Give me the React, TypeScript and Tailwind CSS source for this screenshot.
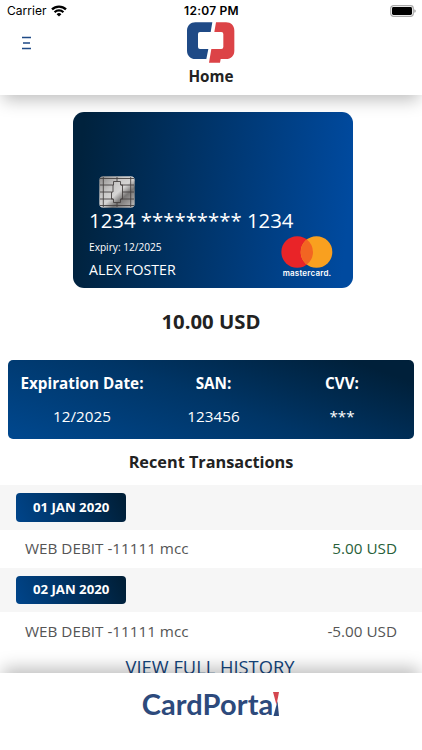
import { type ReactNode } from 'react'

const transactions = [
  { date: '01 JAN 2020', label: 'WEB DEBIT -11111 mcc', amount: '5.00 USD', credit: true },
  { date: '02 JAN 2020', label: 'WEB DEBIT -11111 mcc', amount: '-5.00 USD', credit: false },
]

function StatusBar() {
  return (
    <div className="grid h-[22px] grid-cols-3 items-center pl-[7px] pr-[6px] font-['Inter',sans-serif] text-[12px] leading-[22px] text-black">
      <div className="flex items-center gap-[5px]">
        <span className="tracking-[0.02px]">Carrier</span>
        <svg width="16" height="12" viewBox="0 0 16 12" fill="none" stroke="#000" strokeWidth="2.3">
          <path d="M1 4.4a10 10 0 0 1 14 0" />
          <path d="M3.6 7.2a6.3 6.3 0 0 1 8.8 0" />
          <path d="M8 11.6 5.6 9.2a3.4 3.4 0 0 1 4.8 0Z" fill="#000" stroke="none" />
        </svg>
      </div>
      <span className="whitespace-nowrap text-center font-semibold tracking-[0.25px]">12:07 PM</span>
      <svg className="justify-self-end" width="26" height="12" viewBox="0 0 26 12">
        <rect x="0.7" y="0.7" width="22.6" height="10.6" rx="2.8" fill="#fff" stroke="#a9a9a9" strokeWidth="1.2" />
        <rect x="2" y="2" width="20" height="8" rx="1.4" fill="#000" />
        <path d="M24.500 4.2c1.4.5 1.4 3.1 0 3.6Z" fill="#777" />
      </svg>
    </div>
  )
}

function Logo() {
  return (
    <svg width="48" height="41" viewBox="141 67 144 123">
      <path
        fill="#1f4a86"
        d="M217 68 212 97H180Q174 97 174 103V142Q174 148 180 148H205L199 178H166C152 178 141 168 141 153V93C141 78 152 68 166 68Z"
      />
      <path
        fill="#dc4347"
        d="M228 68H258C273 68 283 78 283 93V153C283 168 273 178 258 178H242L240 189H207L214 148H244Q250 148 250 142V103Q250 97 244 97H223Z"
      />
    </svg>
  )
}

function Chip() {
  return (
    <svg width="36" height="32" viewBox="0 0 36 32">
      <defs>
        <linearGradient id="chip" x1="0" y1="0" x2="1" y2="1">
          <stop offset="0" stopColor="#8b8988" />
          <stop offset="0.35" stopColor="#c9c8c7" />
          <stop offset="0.52" stopColor="#d6d5d4" />
          <stop offset="0.68" stopColor="#777574" />
          <stop offset="1" stopColor="#c4c2c1" />
        </linearGradient>
      </defs>
      <rect x="0.3" y="0.3" width="35.4" height="31.4" rx="4" fill="url(#chip)" />
      <path
        fill="none"
        stroke="#464241"
        strokeWidth="0.9"
        d="M4.3 1V31M31.7 1V31M1 2.500H35M1 29.500H35M1 9H14M1 16H12.500M1 23H14M22 9H35M23.500 16H35M22 23H35M18 1V5.500M18 26.500V31M14.500 5.500H21.500V9H23.500V23H21.500V26.500H14.500V23H12.500V16H14V9H14.500Z"
      />
    </svg>
  )
}

function Mastercard() {
  return (
    <div className="flex w-[52px] flex-col items-center">
      <svg width="52" height="32" viewBox="0 0 52 32">
        <circle cx="16.200" cy="16" r="15.800" fill="#e92428" />
        <circle cx="35.500" cy="16" r="15.800" fill="#f9a01f" />
        <path d="M25.850 3.500a15.800 15.800 0 0 1 0 25a15.800 15.800 0 0 1 0-25Z" fill="#f26522" />
      </svg>
      <span className="mt-px whitespace-nowrap font-['Inter',sans-serif] text-[8px] font-semibold leading-[9px] tracking-[0.2px]">
        mastercard.
      </span>
    </div>
  )
}

function Detail({ title, children }: { title: string; children: ReactNode }) {
  return (
    <div className="flex flex-col items-center whitespace-nowrap text-[15.250px] leading-[20px]">
      <span className="font-bold">{title}</span>
      <span className="mt-[13px]">{children}</span>
    </div>
  )
}

export default function App() {
  return (
    <div className="flex h-[750px] w-[422px] flex-col overflow-hidden bg-white font-['Open_Sans',sans-serif] text-[#222]">
      <header className="relative z-10 h-[95px] shrink-0 bg-white shadow-[0_8px_16px_-3px_rgba(0,0,0,0.26)]">
        <StatusBar />
        <div className="grid grid-cols-3">
          <button className="ml-[22px] mt-[14px] h-[14px] w-[9px]">
            <svg width="9" height="14" viewBox="0 0 9 14" stroke="#1f4a86" strokeWidth="1.4">
              <path d="M0 1.500H9M1 7H8M0 12.500H9" />
            </svg>
          </button>
          <div className="flex flex-col items-center">
            <Logo />
            <h1 className="mt-[3px] text-[15.250px] font-bold leading-[20px]">Home</h1>
          </div>
        </div>
      </header>

      <main className="flex min-h-0 flex-1 flex-col">
        <section className="ml-[73px] mt-[17px] flex h-[176px] w-[279.500px] shrink-0 flex-col rounded-[11px] bg-[linear-gradient(96deg,#00223d_4%,#004a9f_96%)] pl-4 text-white">
          <div className="ml-[10px] mt-[64px] h-8">
            <Chip />
          </div>
          <p className="-mt-px whitespace-nowrap text-[20.350px] leading-[26px]">1234 ********* 1234</p>
          <div className="flex justify-between pr-[19.500px]">
            <div>
              <p className="mt-[7px] text-[10.150px] leading-[14px]">Expiry: 12/2025</p>
              <p className="mt-[6px] text-[14.200px] leading-[20px]">ALEX FOSTER</p>
            </div>
            <div className="mt-[3px]">
              <Mastercard />
            </div>
          </div>
        </section>

        <p className="mt-[19px] text-center text-[20.300px] font-bold leading-[28px]">10.00 USD</p>

        <section className="ml-[8px] mr-[8.500px] mt-[25px] grid h-[78.500px] shrink-0 grid-cols-[148px_115px_142px] rounded-[5px] bg-[linear-gradient(20deg,#00488f_0%,#003566_50%,#00203a_90%)] pt-[13px] text-white">
          <Detail title="Expiration Date:">12/2025</Detail>
          <Detail title="SAN:">123456</Detail>
          <Detail title="CVV:">***</Detail>
        </section>

        <h2 className="mt-[11px] text-center text-[16.300px] font-bold leading-[24px] tracking-[-0.01px]">Recent Transactions</h2>

        <div className="mt-[11.500px]">
          {transactions.map((t) => (
            <div key={t.date}>
              <div className="flex h-[44.500px] items-center bg-[#f6f6f6] pl-[16.400px]">
                <span className="flex h-[28.500px] w-[109.500px] items-center justify-center rounded-[4px] bg-[linear-gradient(65deg,#00458b_0%,#003261_50%,#001f38_95%)] pt-px text-[13.200px] font-bold text-white">
                  {t.date}
                </span>
              </div>
              <div className="flex h-[38px] items-center justify-between whitespace-nowrap pl-[25px] pr-[25px] text-[15.250px] text-[#555]">
                <span>{t.label}</span>
                <span className={t.credit ? 'text-[#286039]' : ''}>{t.amount}</span>
              </div>
            </div>
          ))}
        </div>
        <a className="mt-[5px] whitespace-nowrap pr-[2px] text-center text-[18.300px] leading-[24px] text-[#14457d]">VIEW FULL HISTORY</a>
      </main>

      <footer className="relative z-10 flex h-[77px] shrink-0 justify-center bg-white pt-[12px] shadow-[0_-8px_16px_-3px_rgba(0,0,0,0.26)]">
        <div className="flex h-[38px] font-['Lato',sans-serif] text-[29px] font-bold leading-[38px] text-[#2d4a7c]">
          <span className="tracking-[0.1px]">CardPorta</span>
          <svg className="mt-[7px]" width="7" height="24" viewBox="0 0 7 24">
            <path d="M0 0H6L3.500 13Z" fill="#d4474f" />
            <path d="M4.500 9 6 24H0.500Z" fill="#2d4a7c" />
          </svg>
        </div>
      </footer>
    </div>
  )
}
